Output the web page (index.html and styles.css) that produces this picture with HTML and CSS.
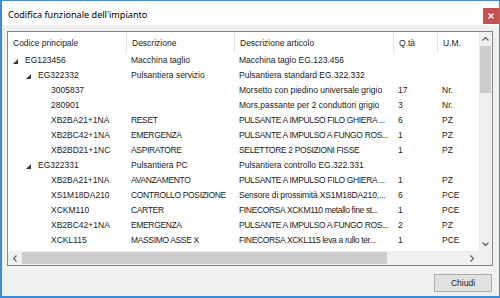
FILE: index.html
```html
<!DOCTYPE html>
<html>
<head>
<meta charset="utf-8">
<link rel="stylesheet" href="styles.css">
</head>
<body>
<div class="window">
  <div class="titlebar">
    <span class="title">Codifica funzionale dell'impianto</span>
    <div class="close"><svg width="6" height="6" viewBox="0 0 6 6"><path d="M0.5 0.5 L5.5 5.5 M5.5 0.5 L0.5 5.5" stroke="#fff" stroke-width="1.4"/></svg></div>
  </div>
  <div class="content">
    <div class="listview">
      <div class="lv-main">
        <div class="lv-body">
          <div class="row header">
            <div class="hc">Codice principale</div>
            <div class="hc">Descrizione</div>
            <div class="hc">Descrizione articolo</div>
            <div class="hc">Q.tà</div>
            <div class="hc">U.M.</div>
          </div>
          <div class="row"><div class="c c1 l0"><span class="exp"></span>EG123456</div><div class="c">Macchina taglio</div><div class="c">Macchina tagio EG.123.456</div><div class="c"></div><div class="c"></div></div>
          <div class="row"><div class="c c1 l1"><span class="exp"></span>EG322332</div><div class="c">Pulsantiera servizio</div><div class="c">Pulsantiera standard EG.322.332</div><div class="c"></div><div class="c"></div></div>
          <div class="row"><div class="c c1 l2">3005837</div><div class="c"></div><div class="c">Morsetto con piedino universale grigio</div><div class="c">17</div><div class="c">Nr.</div></div>
          <div class="row"><div class="c c1 l2">280901</div><div class="c"></div><div class="c">Mors.passante per 2 conduttori grigio</div><div class="c">3</div><div class="c">Nr.</div></div>
          <div class="row"><div class="c c1 l2">XB2BA21+1NA</div><div class="c u">RESET</div><div class="c u">PULSANTE A IMPULSO FILO GHIERA ...</div><div class="c">6</div><div class="c">PZ</div></div>
          <div class="row"><div class="c c1 l2">XB2BC42+1NA</div><div class="c u">EMERGENZA</div><div class="c u">PULSANTE A IMPULSO A FUNGO ROS...</div><div class="c">1</div><div class="c">PZ</div></div>
          <div class="row"><div class="c c1 l2">XB2BD21+1NC</div><div class="c u">ASPIRATORE</div><div class="c u">SELETTORE 2 POSIZIONI FISSE</div><div class="c">1</div><div class="c">PZ</div></div>
          <div class="row"><div class="c c1 l1"><span class="exp"></span>EG322331</div><div class="c">Pulsantiera PC</div><div class="c">Pulsantiera controllo EG.322.331</div><div class="c"></div><div class="c"></div></div>
          <div class="row"><div class="c c1 l2">XB2BA21+1NA</div><div class="c u">AVANZAMENTO</div><div class="c u">PULSANTE A IMPULSO FILO GHIERA ...</div><div class="c">1</div><div class="c">PZ</div></div>
          <div class="row"><div class="c c1 l2">XS1M18DA210</div><div class="c u">CONTROLLO POSIZIONE</div><div class="c t">Sensore di prossimità XS1M18DA210,...</div><div class="c">6</div><div class="c">PCE</div></div>
          <div class="row"><div class="c c1 l2">XCKM110</div><div class="c u">CARTER</div><div class="c u">FINECORSA XCKM110 metallo fine st...</div><div class="c">1</div><div class="c">PCE</div></div>
          <div class="row"><div class="c c1 l2">XB2BC42+1NA</div><div class="c u">EMERGENZA</div><div class="c u">PULSANTE A IMPULSO A FUNGO ROS...</div><div class="c">2</div><div class="c">PZ</div></div>
          <div class="row"><div class="c c1 l2">XCKL115</div><div class="c u">MASSIMO ASSE X</div><div class="c u">FINECORSA XCKL115 leva a rullo ter...</div><div class="c">1</div><div class="c">PCE</div></div>
        </div>
        <div class="vscroll">
          <div class="arrow"><svg width="7" height="4" viewBox="0 0 7 4"><path d="M0.5 3.5 L3.5 0.5 L6.5 3.5" fill="none" stroke="#606060" stroke-width="1.2"/></svg></div>
          <div class="vtrack"><div class="vthumb"></div></div>
          <div class="arrow"><svg width="7" height="4" viewBox="0 0 7 4"><path d="M0.5 0.5 L3.5 3.5 L6.5 0.5" fill="none" stroke="#606060" stroke-width="1.2"/></svg></div>
        </div>
      </div>
      <div class="hscroll">
        <div class="harrow"><svg width="4" height="7" viewBox="0 0 4 7"><path d="M3.5 0.5 L0.5 3.5 L3.5 6.5" fill="none" stroke="#606060" stroke-width="1.2"/></svg></div>
        <div class="htrack"><div class="hthumb"></div></div>
        <div class="harrow"><svg width="4" height="7" viewBox="0 0 4 7"><path d="M0.5 0.5 L3.5 3.5 L0.5 6.5" fill="none" stroke="#606060" stroke-width="1.2"/></svg></div>
        <div class="corner"></div>
      </div>
    </div>
    <div class="footer">
      <button class="btn">Chiudi</button>
    </div>
  </div>
</div>
</body>
</html>
```

FILE: styles.css
```css
html, body {
  margin: 0;
  padding: 0;
  background: #f0f0f0;
}
.window {
  width: 500px;
  height: 298px;
  box-sizing: border-box;
  border: 1px solid #3c8bd8;
  border-width: 1px 1px 2px 2px;
  background: #f0f0f0;
  display: flex;
  flex-direction: column;
  font-family: "Liberation Sans", Arial, sans-serif;
  font-size: 8.5px;
  color: #1b1b1b;
}
.titlebar {
  height: 24px;
  background: #fff;
  display: flex;
  justify-content: space-between;
  align-items: flex-start;
  padding-left: 6px;
}
.title {
  font-family: "Noto Sans", sans-serif;
  font-size: 9.1px;
  line-height: 27px;
  color: #000;
}
.close {
  width: 16px;
  height: 16px;
  margin-top: 7px;
  background: #c75050;
  display: flex;
  align-items: center;
  justify-content: center;
}
.content {
  flex: 1;
  display: flex;
  flex-direction: column;
  padding: 6px 6px 0 5px;
}
.listview {
  height: 235px;
  box-sizing: border-box;
  border: 1px solid #828790;
  background: #fff;
  display: flex;
  flex-direction: column;
}
.lv-main {
  flex: 1;
  display: flex;
  min-height: 0;
}
.lv-body {
  flex: 1;
  overflow: hidden;
}
.row {
  display: grid;
  grid-template-columns: 119px 108px 159px 44px 80px;
  height: 15px;
  line-height: 15px;
  white-space: nowrap;
}
.row.header {
  height: 21px;
  line-height: 22px;
}
.hc {
  padding-left: 5px;
  border-right: 1px solid #e5e5e5;
  overflow: hidden;
}
.c {
  padding-left: 4px;
  overflow: hidden;
}
.c.u {
  letter-spacing: -0.35px;
}
.c.t {
  letter-spacing: -0.15px;
}
.c1 {
  display: flex;
  align-items: center;
}
.l0 { padding-left: 17px; }
.l1 { padding-left: 30px; }
.l2 { padding-left: 43px; }
.exp {
  width: 0;
  height: 0;
  border-left: 5px solid transparent;
  border-bottom: 5px solid #3a3a3a;
  margin-left: -12px;
  margin-right: 7px;
  margin-top: 1px;
}
.vscroll {
  width: 13px;
  background: #f0f0f0;
  display: flex;
  flex-direction: column;
}
.arrow {
  height: 14px;
  display: flex;
  align-items: center;
  justify-content: center;
}
.vtrack {
  flex: 1;
}
.vthumb {
  height: 47px;
  margin: 0 1px;
  background: #cdcdcd;
}
.hscroll {
  height: 14px;
  display: flex;
  background: #f0f0f0;
}
.harrow {
  width: 14px;
  display: flex;
  align-items: center;
  justify-content: center;
}
.htrack {
  flex: 1;
  display: flex;
  align-items: center;
}
.hthumb {
  width: 365px;
  height: 12px;
  background: #cdcdcd;
}
.corner {
  width: 13px;
  background: #f0f0f0;
}
.footer {
  display: flex;
  justify-content: flex-end;
  padding-top: 8px;
}
.btn {
  width: 58px;
  height: 18px;
  margin-right: 1px;
  box-sizing: border-box;
  border: 1px solid #adadad;
  background: #e1e1e1;
  font-family: "Liberation Sans", Arial, sans-serif;
  font-size: 8.5px;
  color: #1b1b1b;
  padding: 0;
}
```
